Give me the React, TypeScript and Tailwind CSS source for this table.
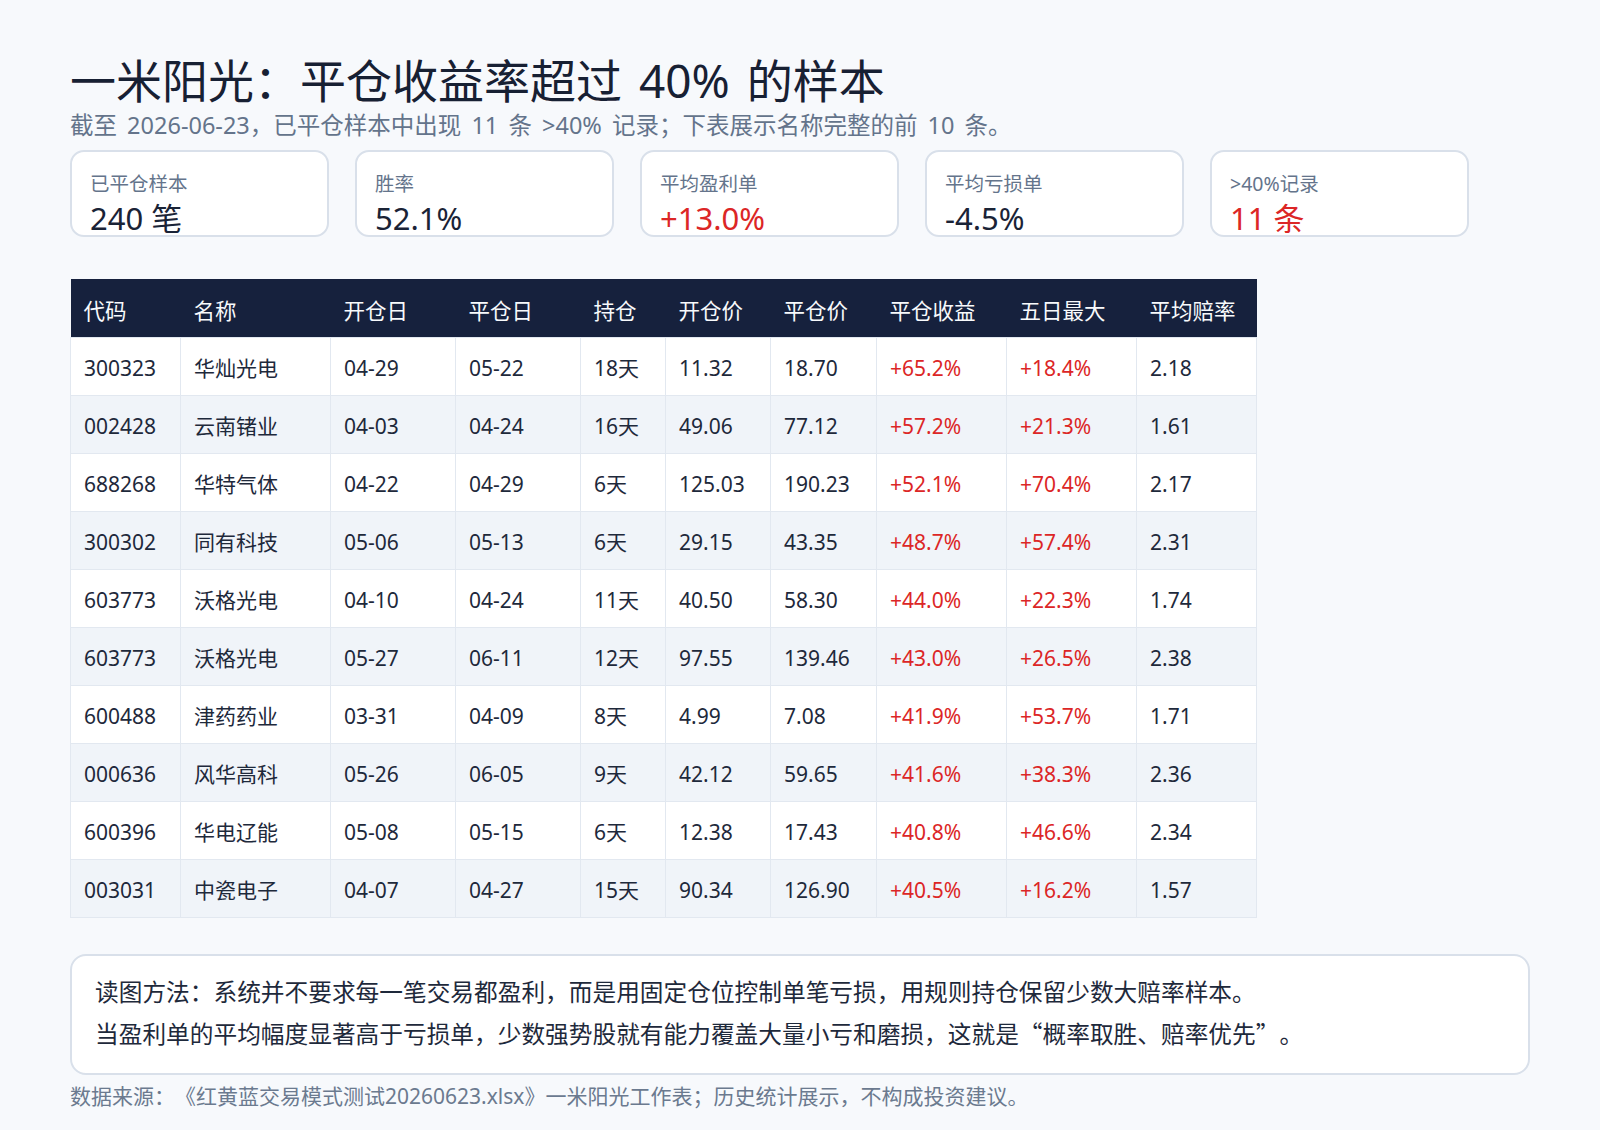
import React from "react";

const rows = [
  ["300323", "华灿光电", "04-29", "05-22", "18天", "11.32", "18.70", "+65.2%", "+18.4%", "2.18"],
  ["002428", "云南锗业", "04-03", "04-24", "16天", "49.06", "77.12", "+57.2%", "+21.3%", "1.61"],
  ["688268", "华特气体", "04-22", "04-29", "6天", "125.03", "190.23", "+52.1%", "+70.4%", "2.17"],
  ["300302", "同有科技", "05-06", "05-13", "6天", "29.15", "43.35", "+48.7%", "+57.4%", "2.31"],
  ["603773", "沃格光电", "04-10", "04-24", "11天", "40.50", "58.30", "+44.0%", "+22.3%", "1.74"],
  ["603773", "沃格光电", "05-27", "06-11", "12天", "97.55", "139.46", "+43.0%", "+26.5%", "2.38"],
  ["600488", "津药药业", "03-31", "04-09", "8天", "4.99", "7.08", "+41.9%", "+53.7%", "1.71"],
  ["000636", "风华高科", "05-26", "06-05", "9天", "42.12", "59.65", "+41.6%", "+38.3%", "2.36"],
  ["600396", "华电辽能", "05-08", "05-15", "6天", "12.38", "17.43", "+40.8%", "+46.6%", "2.34"],
  ["003031", "中瓷电子", "04-07", "04-27", "15天", "90.34", "126.90", "+40.5%", "+16.2%", "1.57"],
];

const headers = ["代码", "名称", "开仓日", "平仓日", "持仓", "开仓价", "平仓价", "平仓收益", "五日最大", "平均赔率"];
const widths = [110, 150, 125, 125, 85, 105, 106, 130, 130, 120];

const cards: { label: string; value: string; red?: boolean }[] = [
  { label: "已平仓样本", value: "240 笔" },
  { label: "胜率", value: "52.1%" },
  { label: "平均盈利单", value: "+13.0%", red: true },
  { label: "平均亏损单", value: "-4.5%" },
  { label: ">40%记录", value: "11 条", red: true },
];

const cjk = '"Noto Sans CJK SC", sans-serif';

export default function App() {
  return (
    <div
      className="w-[1600px] h-[1130px] bg-[#f7f9fc] px-[70px] pt-[52px] [text-spacing-trim:space-all]"
      style={{ fontFamily: '"Noto Sans", "Noto Sans CJK SC", sans-serif' }}
    >
      <h1 className="text-[46px] leading-[56px] text-[#172033] font-normal [word-spacing:5px]">
        一米阳光：平仓收益率超过 40% 的样本
      </h1>
      <p className="mt-[2px] text-[23.5px] leading-[30px] text-[#64748b] [word-spacing:4px]">
        截至 2026-06-23，已平仓样本中出现 11 条 &gt;40% 记录；下表展示名称完整的前 10 条。
      </p>

      <div className="mt-[10px] flex gap-[26px]">
        {cards.map((c) => (
          <div
            key={c.label}
            className="w-[259px] h-[87px] rounded-[14px] border-2 border-[#d9e0ea] bg-white pl-[18px] pt-[20px]"
          >
            <div className="text-[19.5px] leading-[24px] text-[#64748b]">{c.label}</div>
            <div
              className={
                "mt-[4px] text-[31px] leading-[36px] " + (c.red ? "text-[#dc2626]" : "text-[#1a2336]")
              }
            >
              {c.value}
            </div>
          </div>
        ))}
      </div>

      <table className="mt-[42px] table-fixed border-collapse text-[21px] w-[1186px]">
        <colgroup>
          {widths.map((w, i) => (
            <col key={i} style={{ width: w }} />
          ))}
        </colgroup>
        <thead>
          <tr className="bg-[#16213d] h-[58px]">
            {headers.map((h) => (
              <th key={h} className="text-left font-normal text-[#f8fafc] pl-[13px] pt-[6px] text-[21.5px]">
                {h}
              </th>
            ))}
          </tr>
        </thead>
        <tbody>
          {rows.map((r, i) => (
            <tr key={i} className={(i % 2 === 1 ? "bg-[#f0f4f9]" : "bg-white") + " h-[58px]"}>
              {r.map((v, j) => (
                <td
                  key={j}
                  className={
                    "border border-[#e2e8f0] pl-[13px] pt-[6px] " +
                    (j === 7 || j === 8 ? "text-[#dc2626]" : "text-[#1e293b]")
                  }
                >
                  {v}
                </td>
              ))}
            </tr>
          ))}
        </tbody>
      </table>

      <div className="mt-[36px] w-[1460px] rounded-[16px] border-2 border-[#d9e0ea] bg-white px-[23px] pt-[16px] pb-[18px] text-[23.7px] leading-[41px] text-[#1e293b]">
        <div>读图方法：系统并不要求每一笔交易都盈利，而是用固定仓位控制单笔亏损，用规则持仓保留少数大赔率样本。</div>
        <div>
          当盈利单的平均幅度显著高于亏损单，少数强势股就有能力覆盖大量小亏和磨损，这就是
          <span style={{ fontFamily: cjk }}>“概率取胜、赔率优先”。</span>
        </div>
      </div>

      <p className="mt-[7px] text-[21px] leading-[28px] text-[#6b7a8f]">
        数据来源：《红黄蓝交易模式测试20260623.xlsx》一米阳光工作表；历史统计展示，不构成投资建议。
      </p>
    </div>
  );
}
